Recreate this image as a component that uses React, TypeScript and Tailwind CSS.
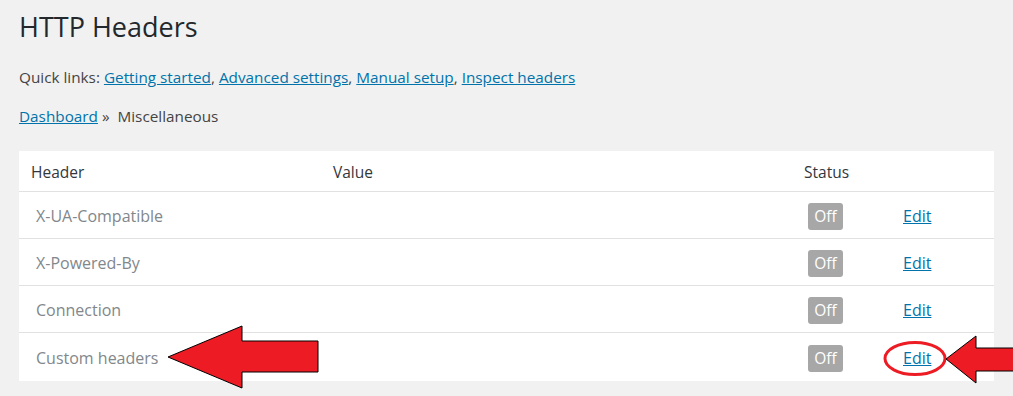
import React from "react";

const rows = ["X-UA-Compatible", "X-Powered-By", "Connection", "Custom headers"];
const quickLinks = ["Getting started", "Advanced settings", "Manual setup", "Inspect headers"];

export default function App() {
  return (
    <div
      className="relative w-[1013px] h-[396px] overflow-hidden bg-[#f1f1f1] text-[#444] px-[19px]"
      style={{ fontFamily: '"Open Sans", "Noto Sans", sans-serif' }}
    >
      <h1 className="pt-[7px] text-[27px] leading-[40px] text-[#23282d]">HTTP Headers</h1>

      <p className="mt-[18px] text-[15.3px] leading-[24px]">
        Quick links:{" "}
        {quickLinks.map((l, i) => (
          <span key={l}>
            <a href="#" className="text-[#0073aa] underline">{l}</a>
            {i < quickLinks.length - 1 ? ", " : ""}
          </span>
        ))}
      </p>

      <p className="mt-[15px] text-[15.3px] leading-[24px]">
        <a href="#" className="text-[#0073aa] underline">Dashboard</a>
        <span className="ml-1">»&nbsp;&nbsp;Miscellaneous</span>
      </p>

      {/* Table */}
      <div className="mt-[23px] w-[975px] bg-white text-[15.5px]">
        <div className="grid grid-cols-[314px_459px_111px_1fr] h-[41px] pt-[4px] items-center border-b border-[#e1e1e1] text-[#32373c]">
          <div className="pl-3">Header</div>
          <div>Value</div>
          <div className="pl-3">Status</div>
          <div />
        </div>
        {rows.map((r, i) => (
          <div
            key={r}
            className={`grid grid-cols-[314px_459px_111px_1fr] h-[47px] pt-[2px] items-center text-[#82878c] ${
              i < rows.length - 1 ? "border-b border-[#e1e1e1]" : "h-[48px]"
            }`}
          >
            <div className="pl-[17px] text-[16px]">{r}</div>
            <div />
            <div className="pl-4">
              <span className="inline-flex items-center justify-center w-[35px] h-[27px] pt-[2px] rounded-[3px] bg-[#a7a7a7] text-white">
                Off
              </span>
            </div>
            <div>
              <a href="#" className="text-[#0073aa] underline text-[16px]">Edit</a>
            </div>
          </div>
        ))}
      </div>

      {/* Annotations */}
      <svg className="absolute left-0 top-0 pointer-events-none" width="1013" height="396" viewBox="0 0 1013 396">
        <polygon
          points="168,357 242,326 242,341 318,341 318,372 242,372 242,388"
          fill="#ed1c24"
          stroke="#000"
          strokeWidth="1"
        />
        <ellipse cx="915" cy="358.5" rx="30" ry="16" fill="none" stroke="#ed1c24" strokeWidth="3" />
        <polygon
          points="946,359 976,336 976,348 1014,348 1014,371 976,371 976,383"
          fill="#ed1c24"
          stroke="#000"
          strokeWidth="1"
        />
      </svg>
    </div>
  );
}
